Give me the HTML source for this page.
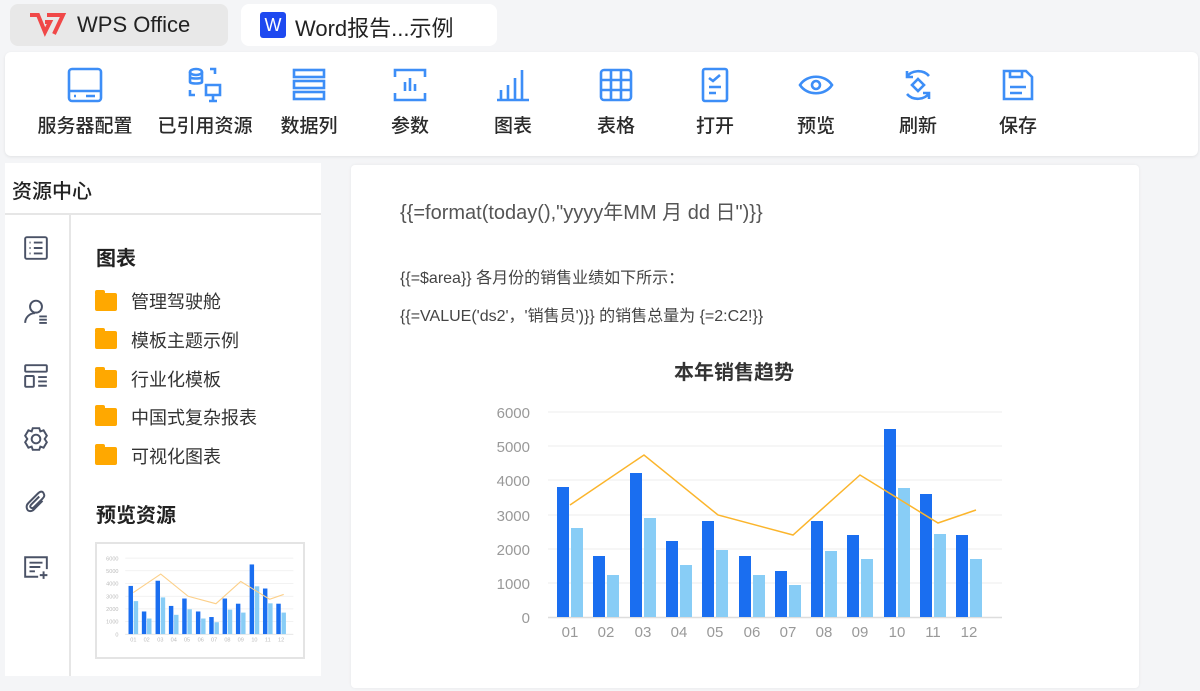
<!DOCTYPE html>
<html><head><meta charset="utf-8">
<style>
*{margin:0;padding:0;box-sizing:border-box}
body{width:1200px;height:691px;overflow:hidden;background:#f4f5f7;font-family:"Liberation Sans","Noto Sans CJK SC",sans-serif;position:relative;color:#333}
.abs{position:absolute}
.tab1{left:10px;top:4px;width:218px;height:42px;background:#e8e8e8;border-radius:8px}
.tab2{left:241px;top:4px;width:256px;height:42px;background:#fff;border-radius:8px}
.tb{left:5px;top:52px;width:1193px;height:104px;background:#fff;border-radius:6px;box-shadow:0 1px 3px rgba(0,0,0,.08)}
.it{position:absolute;top:14px;width:120px;margin-left:-60px;text-align:center;font-size:19px;color:#2a2a2a;font-weight:500}
.it svg{display:block;margin:0 auto 7px;width:38px;height:38px}
.side{left:5px;top:163px;width:316px;height:513px;background:#fff}
.doc{left:351px;top:165px;width:788px;height:523px;background:#fff;border-radius:4px;box-shadow:0 0 3px rgba(0,0,0,.06)}
.fold{position:absolute;left:95px;width:22px;height:18px;background:#ffa800;border-radius:2px}
.fold:before{content:"";position:absolute;left:0;top:-3px;width:10px;height:4px;background:#ffa800;border-radius:2px 2px 0 0}
.ft{position:absolute;left:131px;font-size:18px;color:#333}
.si{position:absolute;left:23px;width:26px;height:26px}
</style></head><body>
<div class="abs tab1"></div>
<svg class="abs" style="left:27px;top:12px" width="40" height="26" viewBox="0 0 40 26"><path d="M3 3h8l7 17 5-10h-5M20 3h16l-9 19" fill="none" stroke="#f04848" stroke-width="4" stroke-linejoin="miter"/></svg>
<div class="abs" style="left:77px;top:12px;font-size:22px;color:#222">WPS Office</div>
<div class="abs tab2"></div>
<div class="abs" style="left:260px;top:12px;width:26px;height:26px;background:#1e49f0;border-radius:3px;color:#fff;font-size:18px;text-align:center;line-height:27px">W</div>
<div class="abs" style="left:295px;top:11px;font-size:22px;color:#222">Word报告...示例</div>

<div class="abs tb">
<div class="it" style="left:80px"><svg viewBox="0 0 38 38" fill="none" stroke="#3d8ef7" stroke-width="2.6"><rect x="3" y="3" width="32" height="32" rx="3"/><path d="M3 25h32M8 30h2M20 30h9"/></svg>服务器配置</div>
<div class="it" style="left:200px"><svg viewBox="0 0 38 38" fill="none" stroke="#3d8ef7" stroke-width="2.6"><ellipse cx="10" cy="6" rx="6" ry="3"/><path d="M4 6v10c0 2 12 2 12 0V6M4 11c0 2 12 2 12 0M24 3h5v5M4 24v5h5M20 19h14v10H20zM27 29v5M23 35h8"/></svg>已引用资源</div>
<div class="it" style="left:304px"><svg viewBox="0 0 38 38" fill="none" stroke="#3d8ef7" stroke-width="2.6"><rect x="4" y="4" width="30" height="7"/><rect x="4" y="15" width="30" height="7"/><rect x="4" y="26" width="30" height="7"/></svg>数据列</div>
<div class="it" style="left:405px"><svg viewBox="0 0 38 38" fill="none" stroke="#3d8ef7" stroke-width="2.6"><path d="M4 11V4h30v7M4 27v7h30v-7M14 16v9M19 12v13M24 18v7"/></svg>参数</div>
<div class="it" style="left:508px"><svg viewBox="0 0 38 38" fill="none" stroke="#3d8ef7" stroke-width="2.6"><path d="M3 34h32M7 34V24M14 34V19M21 34V12M28 34V4"/></svg>图表</div>
<div class="it" style="left:611px"><svg viewBox="0 0 38 38" fill="none" stroke="#3d8ef7" stroke-width="2.6"><rect x="4" y="4" width="30" height="30" rx="3"/><path d="M4 14h30M4 24h30M14 4v30M24 4v30"/></svg>表格</div>
<div class="it" style="left:710px"><svg viewBox="0 0 38 38" fill="none" stroke="#3d8ef7" stroke-width="2.6"><rect x="7" y="3" width="24" height="32" rx="2"/><path d="M13 12l4 3 7-6M13 21h12M13 27h7"/></svg>打开</div>
<div class="it" style="left:811px"><svg viewBox="0 0 38 38" fill="none" stroke="#3d8ef7" stroke-width="2.6"><path d="M3 19C10 8 28 8 35 19 28 30 10 30 3 19z"/><circle cx="19" cy="19" r="4"/></svg>预览</div>
<div class="it" style="left:913px"><svg viewBox="0 0 38 38" fill="none" stroke="#3d8ef7" stroke-width="2.6"><path d="M8 11C12 4 24 3 30 10M8 5v6h6M30 27C26 34 14 35 8 28M30 33v-6h-6M19 13l6 6-6 6-6-6z"/></svg>刷新</div>
<div class="it" style="left:1013px"><svg viewBox="0 0 38 38" fill="none" stroke="#3d8ef7" stroke-width="2.6"><path d="M5 5h22l6 6v22H5z"/><path d="M11 5v6h12V5M11 21h16M11 27h12"/></svg>保存</div>
</div>

<div class="abs side"></div>
<div class="abs" style="left:12px;top:175px;font-size:20px;color:#222;font-weight:500">资源中心</div>
<div class="abs" style="left:5px;top:213px;width:316px;height:2px;background:#e6e6e6"></div>
<div class="abs" style="left:69px;top:215px;width:2px;height:461px;background:#e6e6e6"></div>
<svg class="si" style="top:235px" viewBox="0 0 24 24" fill="none" stroke="#4a5266" stroke-width="1.8"><rect x="2" y="2" width="20" height="20" rx="1.5"/><path d="M6 7h1M10 7h8M6 12h1M10 12h8M6 17h1M10 17h8"/></svg>
<svg class="si" style="top:298px" viewBox="0 0 24 24" fill="none" stroke="#4a5266" stroke-width="1.8"><circle cx="12" cy="8" r="5.5"/><path d="M2 23c0-5 4-9 9-9M15 17h7M15 20h7M15 23h7"/></svg>
<svg class="si" style="top:363px" viewBox="0 0 24 24" fill="none" stroke="#4a5266" stroke-width="1.8"><rect x="2" y="2" width="20" height="6" rx="1"/><rect x="2" y="12" width="8" height="10" rx="1"/><path d="M14 13h8M14 17h8M14 21h8"/></svg>
<svg class="si" style="top:426px" viewBox="0 0 24 24" fill="none" stroke="#4a5266" stroke-width="1.8"><path d="M9 2h6l1 3 3-1 3 5-2 3 2 3-3 5-3-1-1 3H9l-1-3-3 1-3-5 2-3-2-3 3-5 3 1z"/><circle cx="12" cy="12" r="4"/></svg>
<svg class="si" style="top:490px" viewBox="0 0 24 24" fill="none" stroke="#4a5266" stroke-width="1.8"><path d="M18 10l-8 8c-2 2-5 2-6 0s-1-4 1-6l9-9c2-2 4-2 5 0s1 3-1 5l-8 8c-1 1-2 1-3 0s0-2 1-3l7-7"/></svg>
<svg class="si" style="top:554px" viewBox="0 0 24 24" fill="none" stroke="#4a5266" stroke-width="1.8"><path d="M14 21H2V3h20v11M6 8h12M6 12h10M6 16h5M19 16v7M15.5 19.5h7"/></svg>

<div class="abs" style="left:96px;top:242px;font-size:20px;color:#222;font-weight:bold">图表</div>
<div class="fold" style="top:293px"></div><div class="ft" style="top:288px">管理驾驶舱</div>
<div class="fold" style="top:331px"></div><div class="ft" style="top:327px">模板主题示例</div>
<div class="fold" style="top:370px"></div><div class="ft" style="top:366px">行业化模板</div>
<div class="fold" style="top:408px"></div><div class="ft" style="top:404px">中国式复杂报表</div>
<div class="fold" style="top:447px"></div><div class="ft" style="top:443px">可视化图表</div>
<div class="abs" style="left:96px;top:499px;font-size:20px;color:#222;font-weight:bold">预览资源</div>
<div class="abs" style="left:95px;top:542px;width:210px;height:117px;border:2px solid #e4e4e4;background:#fff"></div>

<div class="abs doc"></div>
<div class="abs" style="left:400px;top:196px;font-size:20px;color:#555">{{=format(today(),"yyyy年MM 月 dd 日")}}</div>
<div class="abs" style="left:400px;top:264px;font-size:16px;color:#444">{{=$area}} 各月份的销售业绩如下所示：</div>
<div class="abs" style="left:400px;top:302px;font-size:16px;color:#444">{{=VALUE('ds2'，'销售员')}} 的销售总量为 {=2:C2!}}</div>
<div class="abs" style="left:674px;top:356px;font-size:20px;color:#333;font-weight:bold">本年销售趋势</div>

<svg class="abs" style="left:480px;top:400px" width="540" height="250" viewBox="480 400 540 250">
<g stroke="#eeeeee" stroke-width="1"><path d="M548 412H1002M548 446H1002M548 480H1002M548 515H1002M548 549H1002M548 583H1002"/></g>
<path d="M548 617.5H1002" stroke="#dddddd" stroke-width="1.5"/>
<g font-size="15" fill="#999" text-anchor="end" font-family="Liberation Sans,sans-serif"><text x="530" y="418">6000</text><text x="530" y="452">5000</text><text x="530" y="486">4000</text><text x="530" y="521">3000</text><text x="530" y="555">2000</text><text x="530" y="589">1000</text><text x="530" y="623">0</text></g>
<g font-size="15" fill="#999" text-anchor="middle" font-family="Liberation Sans,sans-serif"><text x="570" y="637">01</text><text x="606" y="637">02</text><text x="643" y="637">03</text><text x="679" y="637">04</text><text x="715" y="637">05</text><text x="752" y="637">06</text><text x="788" y="637">07</text><text x="824" y="637">08</text><text x="860" y="637">09</text><text x="897" y="637">10</text><text x="933" y="637">11</text><text x="969" y="637">12</text></g>
<g fill="#1a6ef0"><rect x="557" y="487" width="12" height="130"/><rect x="593" y="556" width="12" height="61"/><rect x="630" y="473" width="12" height="144"/><rect x="666" y="541" width="12" height="76"/><rect x="702" y="521" width="12" height="96"/><rect x="739" y="556" width="12" height="61"/><rect x="775" y="571" width="12" height="46"/><rect x="811" y="521" width="12" height="96"/><rect x="847" y="535" width="12" height="82"/><rect x="884" y="429" width="12" height="188"/><rect x="920" y="494" width="12" height="123"/><rect x="956" y="535" width="12" height="82"/></g>
<g fill="#88cdf6"><rect x="571" y="528" width="12" height="89"/><rect x="607" y="575" width="12" height="42"/><rect x="644" y="518" width="12" height="99"/><rect x="680" y="565" width="12" height="52"/><rect x="716" y="550" width="12" height="67"/><rect x="753" y="575" width="12" height="42"/><rect x="789" y="585" width="12" height="32"/><rect x="825" y="551" width="12" height="66"/><rect x="861" y="559" width="12" height="58"/><rect x="898" y="488" width="12" height="129"/><rect x="934" y="534" width="12" height="83"/><rect x="970" y="559" width="12" height="58"/></g>
<polyline points="570,505 644,455 718,515 793,535 860,475 938,523 976,510" fill="none" stroke="#fbb52c" stroke-width="1.5"/>
</svg>

<svg class="abs" style="left:100px;top:552px" width="200" height="96" viewBox="480 400 540 250">
<g stroke="#eeeeee" stroke-width="2"><path d="M548 412H1002M548 446H1002M548 480H1002M548 515H1002M548 549H1002M548 583H1002"/></g>
<path d="M548 617.5H1002" stroke="#dddddd" stroke-width="2"/>
<g font-size="15" fill="#bbb" text-anchor="end"><text x="530" y="418">6000</text><text x="530" y="452">5000</text><text x="530" y="486">4000</text><text x="530" y="521">3000</text><text x="530" y="555">2000</text><text x="530" y="589">1000</text><text x="530" y="623">0</text></g>
<g font-size="15" fill="#bbb" text-anchor="middle"><text x="570" y="637">01</text><text x="606" y="637">02</text><text x="643" y="637">03</text><text x="679" y="637">04</text><text x="715" y="637">05</text><text x="752" y="637">06</text><text x="788" y="637">07</text><text x="824" y="637">08</text><text x="860" y="637">09</text><text x="897" y="637">10</text><text x="933" y="637">11</text><text x="969" y="637">12</text></g>
<g fill="#1a6ef0"><rect x="557" y="487" width="12" height="130"/><rect x="593" y="556" width="12" height="61"/><rect x="630" y="473" width="12" height="144"/><rect x="666" y="541" width="12" height="76"/><rect x="702" y="521" width="12" height="96"/><rect x="739" y="556" width="12" height="61"/><rect x="775" y="571" width="12" height="46"/><rect x="811" y="521" width="12" height="96"/><rect x="847" y="535" width="12" height="82"/><rect x="884" y="429" width="12" height="188"/><rect x="920" y="494" width="12" height="123"/><rect x="956" y="535" width="12" height="82"/></g>
<g fill="#88cdf6"><rect x="571" y="528" width="12" height="89"/><rect x="607" y="575" width="12" height="42"/><rect x="644" y="518" width="12" height="99"/><rect x="680" y="565" width="12" height="52"/><rect x="716" y="550" width="12" height="67"/><rect x="753" y="575" width="12" height="42"/><rect x="789" y="585" width="12" height="32"/><rect x="825" y="551" width="12" height="66"/><rect x="861" y="559" width="12" height="58"/><rect x="898" y="488" width="12" height="129"/><rect x="934" y="534" width="12" height="83"/><rect x="970" y="559" width="12" height="58"/></g>
<polyline points="570,505 644,455 718,515 793,535 860,475 938,523 976,510" fill="none" stroke="#fcd08a" stroke-width="3"/>
</svg>
</body></html>
